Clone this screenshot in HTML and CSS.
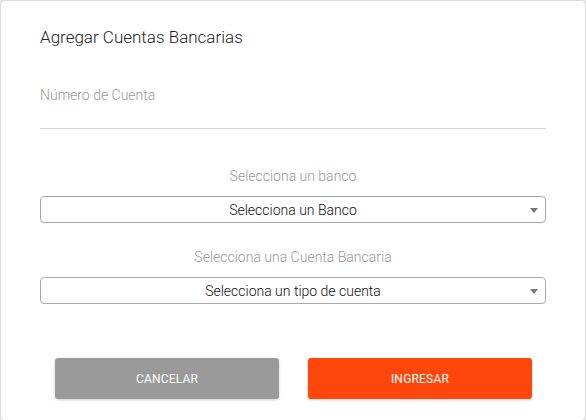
FILE: index.html
```html
<!DOCTYPE html>
<html lang="es">
<head>
<meta charset="utf-8">
<link rel="stylesheet" href="styles.css">
</head>
<body>
<div class="dialog">
  <h1 class="title">Agregar Cuentas Bancarias</h1>
  <div class="field">
    <div class="field-label">Número de Cuenta</div>
  </div>
  <div class="group">
    <div class="group-label">Selecciona un banco</div>
    <div class="select">
      <span>Selecciona un Banco</span>
      <span class="arrow"></span>
    </div>
  </div>
  <div class="group group-2">
    <div class="group-label">Selecciona una Cuenta Bancaria</div>
    <div class="select">
      <span>Selecciona un tipo de cuenta</span>
      <span class="arrow"></span>
    </div>
  </div>
  <div class="actions">
    <button class="btn btn-cancel">CANCELAR</button>
    <button class="btn btn-ok">INGRESAR</button>
  </div>
</div>
</body>
</html>
```

FILE: styles.css
```css
html, body {
  margin: 0;
  padding: 0;
  background: #e9e9e9;
  font-family: Roboto, "Liberation Sans", sans-serif;
}
body {
  width: 586px;
  height: 420px;
  overflow: hidden;
}
.dialog {
  box-sizing: border-box;
  width: 586px;
  height: 421px;
  background: #fff;
  border-radius: 5px;
  border: 1px solid #dcdcdc;
  padding: 0 39px;
}
.title {
  margin: 0;
  padding-top: 25px;
  font-size: 17px;
  font-weight: 300;
  color: #222;
  line-height: 23px;
}
.field {
  margin-top: 37px;
  height: 42px;
  border-bottom: 1px solid #d2d2d2;
}
.field-label {
  font-size: 14px;
  font-weight: 300;
  color: #999;
  line-height: 18px;
}
.group {
  margin-top: 38px;
}
.group-2 {
  margin-top: 25px;
}
.group-label {
  text-align: center;
  font-size: 14px;
  font-weight: 300;
  color: #999;
  line-height: 18px;
  margin-bottom: 11px;
}
.select {
  position: relative;
  box-sizing: border-box;
  height: 27px;
  border: 1px solid #a9a9a9;
  border-radius: 4px;
  display: flex;
  align-items: center;
  justify-content: center;
  font-size: 14px;
  font-weight: 300;
  color: #111;
}
.arrow {
  position: absolute;
  right: 7px;
  top: 11px;
  width: 0;
  height: 0;
  border-left: 4px solid transparent;
  border-right: 4px solid transparent;
  border-top: 5px solid #777;
}
.actions {
  display: flex;
  justify-content: space-between;
  padding: 0 14px 0 15px;
  margin-top: 54px;
}
.btn {
  width: 224px;
  height: 41px;
  border: none;
  border-radius: 3px;
  color: #fff;
  font-family: Roboto, "Liberation Sans", sans-serif;
  font-size: 12px;
  font-weight: 400;
  letter-spacing: 0.2px;
  box-shadow: 0 1px 3px rgba(0,0,0,0.2);
}
.btn-cancel {
  background: #9a9a9a;
}
.btn-ok {
  background: #ff470c;
}
```
